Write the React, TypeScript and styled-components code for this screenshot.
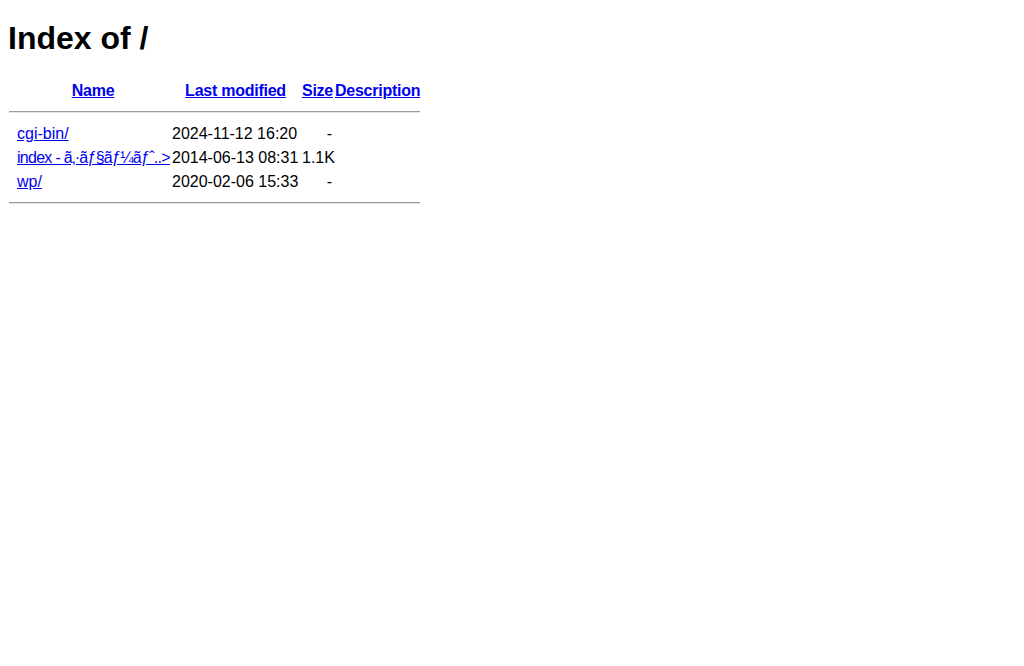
import React from "react"
import styled, { createGlobalStyle } from "styled-components"

const GlobalStyle = createGlobalStyle`
  body {
    margin: 8px;
    background: #ffffff;
    color: #000000;
    font-family: "Liberation Sans", Arial, sans-serif;
  }
`

const Title = styled.h1`
  font-size: 32px;
  font-weight: 700;
  margin: 12px 0 21px;
`

const Listing = styled.table`
  table-layout: fixed;
  width: 415px;
  border-collapse: separate;
  border-spacing: 3px 2px;
  font-size: 16px;
`

const HeadCell = styled.th<{ w: number }>`
  width: ${props => props.w}px;
  padding: 1px 0;
  line-height: 20px;
  font-weight: 700;
  letter-spacing: -0.25px;
  text-align: center;
  white-space: nowrap;
`

const Cell = styled.td<{ right?: boolean }>`
  padding: 1px 0;
  line-height: 20px;
  text-align: ${props => (props.right ? "right" : "left")};
  white-space: nowrap;
`

const RuleCell = styled.th`
  padding: 1px 0;
`

const Rule = styled.hr`
  margin: 6px 0 7px -2px;
  height: 0;
  border: 0;
  border-top: 1px solid #9a9a9a;
  border-bottom: 1px solid #e4e4e4;
`

const FileLink = styled.a<{ tight?: boolean }>`
  color: #0000ee;
  text-decoration: underline;
  letter-spacing: ${props => (props.tight ? "-0.72px" : "inherit")};
`

interface Entry {
  name: string
  modified: string
  size: string
  tight?: boolean
}

const entries: Entry[] = [
  { name: "cgi-bin/", modified: "2024-11-12 16:20", size: "-" },
  {
    name: "index - ã‚·ãƒ§ãƒ¼ãƒˆ..>",
    modified: "2014-06-13 08:31",
    size: "1.1K",
    tight: true,
  },
  { name: "wp/", modified: "2020-02-06 15:33", size: "-" },
]

export default function App() {
  return (
    <>
      <GlobalStyle />
      <Title>Index of /</Title>
      <Listing>
        <thead>
          <tr>
            <HeadCell w={3}></HeadCell>
            <HeadCell w={152}>
              <FileLink href="?C=N;O=D">Name</FileLink>
            </HeadCell>
            <HeadCell w={127}>
              <FileLink href="?C=M;O=A">Last modified</FileLink>
            </HeadCell>
            <HeadCell w={30}>
              <FileLink href="?C=S;O=A">Size</FileLink>
            </HeadCell>
            <HeadCell w={85}>
              <FileLink href="?C=D;O=A">Description</FileLink>
            </HeadCell>
          </tr>
          <tr>
            <RuleCell colSpan={5}>
              <Rule />
            </RuleCell>
          </tr>
        </thead>
        <tbody>
          {entries.map(entry => (
            <tr key={entry.name}>
              <Cell></Cell>
              <Cell>
                <FileLink href="#" tight={entry.tight}>
                  {entry.name}
                </FileLink>
              </Cell>
              <Cell>{entry.modified}</Cell>
              <Cell right>{entry.size}</Cell>
              <Cell></Cell>
            </tr>
          ))}
          <tr>
            <RuleCell colSpan={5}>
              <Rule />
            </RuleCell>
          </tr>
        </tbody>
      </Listing>
    </>
  )
}
